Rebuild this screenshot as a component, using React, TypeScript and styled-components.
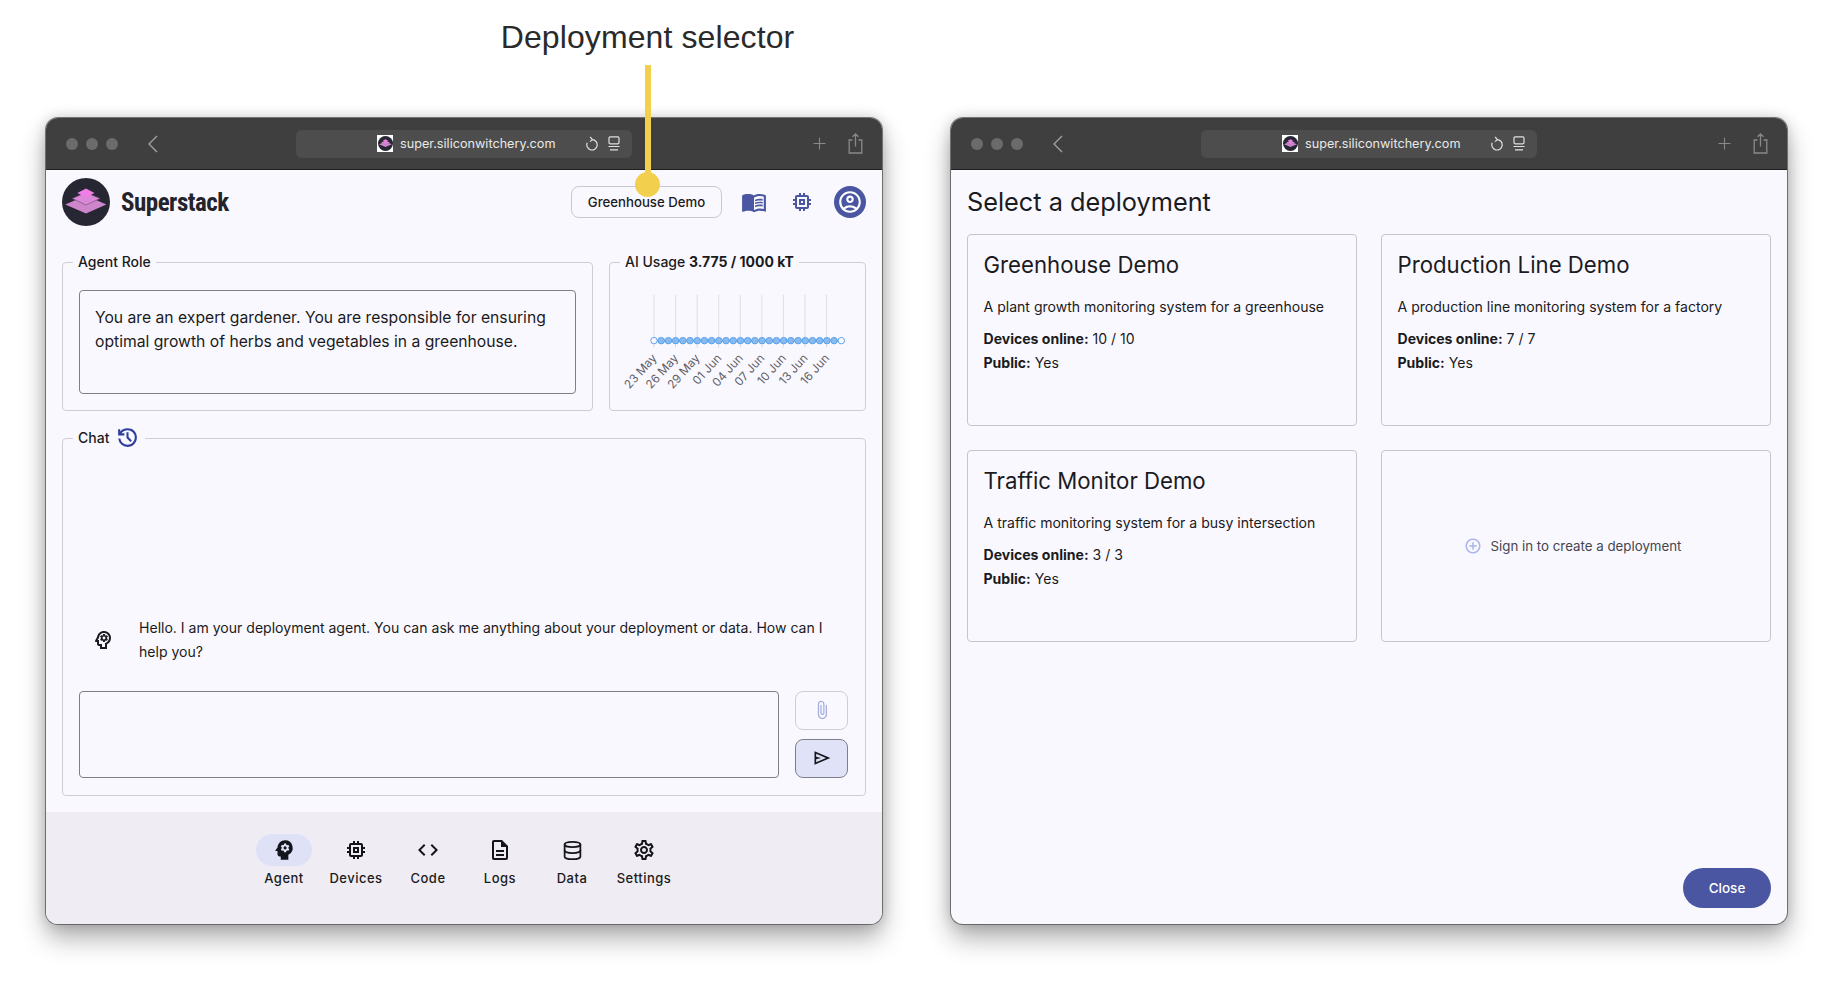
import React from 'react';
import styled, { createGlobalStyle } from 'styled-components';
import { Database, Plus } from 'lucide-react';
import {
  MdAddCircleOutline,
  MdCode,
  MdOutlineAccountCircle,
  MdOutlineAttachFile,
  MdOutlineDescription,
  MdOutlineMemory,
  MdOutlineMenuBook,
  MdOutlinePsychology,
  MdOutlineSettings,
  MdPsychology,
} from 'react-icons/md';

const GlobalStyle = createGlobalStyle`
  html, body {
    margin: 0;
    background: #fff;
    font-family: Inter, "Liberation Sans", sans-serif;
    color: #1a1b21;
  }
  * { box-sizing: border-box; }
`;

const Page = styled.div`
  position: relative;
  width: 1831px;
  height: 996px;
  overflow: hidden;
  display: flex;
  gap: 69px;
  padding: 118px 0 0 46px;
`;

const Callout = styled.div`
  position: absolute;
  left: 480px;
  top: 0;
  width: 335px;
  display: flex;
  flex-direction: column;
  align-items: center;
  z-index: 2;
`;

const CalloutText = styled.div`
  height: 65px;
  line-height: 74px;
  font-family: "Liberation Sans", Arial, sans-serif;
  font-size: 32px;
  letter-spacing: 0.1px;
  color: #2a2a2a;
  white-space: nowrap;
`;

const CalloutLine = styled.div`
  width: 6px;
  height: 114px;
  background: #f2d04e;
`;

const CalloutDot = styled.div`
  width: 25px;
  height: 25px;
  margin-top: -7px;
  border-radius: 50%;
  background: #f2d04e;
`;

const Window = styled.div`
  width: 836px;
  height: 806px;
  display: flex;
  flex-direction: column;
  border-radius: 12px;
  overflow: hidden;
  background: #faf8ff;
  box-shadow: 0 0 0 1px rgba(80, 80, 80, 0.75), 0 14px 26px rgba(0, 0, 0, 0.32), 0 0 14px rgba(0, 0, 0, 0.18);
`;

const TitleBar = styled.div`
  flex: 0 0 52px;
  display: flex;
  align-items: center;
  background: #3f3f3f;
  border-bottom: 1px solid #1f1f1f;
  color: #9a9a9a;
`;

const TrafficLights = styled.div`
  flex: 0 0 250px;
  display: flex;
  align-items: center;
  gap: 8px;
  padding-left: 20px;
`;

const Light = styled.span`
  width: 12px;
  height: 12px;
  border-radius: 50%;
  background: #6b6b6b;
`;

const BackIcon = styled.svg`
  width: 10px;
  height: 18px;
  margin-left: 22px;
`;

const UrlBar = styled.div`
  flex: 0 0 336px;
  height: 28px;
  display: flex;
  align-items: center;
  padding-left: 81px;
  border-radius: 6px;
  background: #4d4d4d;
  color: #e8e8e8;
`;

const Favicon = styled.span`
  width: 16px;
  height: 17px;
  display: flex;
  align-items: center;
  justify-content: center;
  background: #fff;
`;

const UrlText = styled.span`
  margin: 0 29px 0 7px;
  font-size: 12.65px;
  white-space: nowrap;
`;

const UrlTools = styled.div`
  display: flex;
  align-items: center;
  gap: 10px;
`;

const BarActions = styled.div`
  flex: 1;
  display: flex;
  align-items: center;
  justify-content: flex-end;
  gap: 19px;
  padding-right: 19px;
`;

const Body = styled.div`
  flex: 1;
  display: flex;
  flex-direction: column;
  padding: 8px 16px 16px;
`;

const Header = styled.div`
  display: flex;
  align-items: center;
  justify-content: space-between;
  margin-bottom: 26px;
`;

const Brand = styled.div`
  display: flex;
  align-items: center;
  gap: 11px;
`;

const BrandName = styled.div`
  font-family: Roboto, sans-serif;
  font-size: 25px;
  font-weight: 700;
  font-stretch: 75%;
  letter-spacing: -0.5px;
  color: #23232b;
`;

const HeaderTools = styled.div`
  display: flex;
  align-items: center;
  gap: 16px;
  color: #4a56a2;
`;

const SelectorButton = styled.div`
  width: 151px;
  height: 32px;
  display: flex;
  align-items: center;
  justify-content: center;
  border: 1.5px solid #c8c8d2;
  border-radius: 8px;
  font-size: 13.2px;
  font-weight: 500;
  color: #1a1b21;
`;

const IconSlot = styled.div`
  width: 32px;
  height: 32px;
  display: flex;
  align-items: center;
  justify-content: center;
`;

const Avatar = styled(IconSlot)`
  border-radius: 50%;
  background: #4a56a2;
  color: #fff;
`;

const TopRow = styled.div`
  display: grid;
  grid-template-columns: 531px 257px;
  gap: 16px;
`;

const Panel = styled.fieldset<{ $height: number }>`
  margin: 0;
  min-width: 0;
  height: ${(p) => p.$height}px;
  padding: 0 16px 16px;
  display: flex;
  flex-direction: column;
  border: 1.5px solid #cdccd8;
  border-radius: 4px;
`;

const PanelLabel = styled.legend`
  display: flex;
  align-items: center;
  gap: 6px;
  height: 20px;
  margin-left: -6px;
  padding: 0 5px 1px;
  font-size: 14px;
  font-weight: 500;
  white-space: nowrap;
  b { font-weight: 700; }
`;

const TextBox = styled.div`
  flex: 1;
  margin-top: 18px;
  padding: 15px 15px;
  border: 1.5px solid #7f7f8b;
  border-radius: 4px;
  font-size: 15.7px;
  line-height: 24px;
`;

const ChartSvg = styled.svg`
  width: 250px;
  height: 116px;
  margin: 8px 0 0 -17px;
`;

const ChatPanel = styled(Panel)`
  margin-top: 17px;
`;

const ChatBody = styled.div`
  height: 330px;
  display: flex;
  flex-direction: column;
  justify-content: flex-end;
`;

const HistoryIcon = styled.svg`
  width: 25px;
  height: 25px;
  margin: -3px 0;
  fill: #2f3f9e;
`;

const Message = styled.div`
  display: flex;
  align-items: center;
  gap: 24px;
  margin-bottom: 27px;
  padding: 0 10px 0 12px;
  font-size: 14.05px;
  line-height: 24px;
`;

const Composer = styled.div`
  display: grid;
  grid-template-columns: 700px 53px;
  gap: 16px;
`;

const ComposerInput = styled.div`
  height: 87.5px;
  border: 1.5px solid #7f7f8b;
  border-radius: 4px;
`;

const ComposerButtons = styled.div`
  display: flex;
  flex-direction: column;
  justify-content: space-between;
`;

const AttachButton = styled.div`
  height: 39.5px;
  display: flex;
  align-items: center;
  justify-content: center;
  border: 1.5px solid #cdccd8;
  border-radius: 8px;
  color: #a4aedb;
`;

const SendButton = styled(AttachButton)`
  border-color: #7f7f8b;
  background: #e0e3f7;
  color: #14141c;
`;

const SendIcon = styled.svg`
  width: 20px;
  height: 20px;
  fill: currentColor;
`;

const NavBar = styled.nav`
  flex: 0 0 112px;
  display: flex;
  justify-content: center;
  padding-top: 22px;
  background: #efedf3;
`;

const NavItem = styled.div`
  width: 72px;
  display: flex;
  flex-direction: column;
  align-items: center;
  gap: 2px;
  font-size: 13px;
  line-height: 20px;
  font-weight: 500;
  letter-spacing: 0.5px;
`;

const NavIcon = styled.div<{ $active?: boolean }>`
  width: 56px;
  height: 32px;
  display: flex;
  align-items: center;
  justify-content: center;
  border-radius: 16px;
  background: ${(p) => (p.$active ? '#dfe2f6' : 'transparent')};
  color: #14141c;
`;

const PageTitle = styled.h1`
  margin: 7px 0 15px;
  font-size: 25.3px;
  line-height: 34px;
  font-weight: 400;
`;

const CardGrid = styled.div`
  display: grid;
  grid-template-columns: 390px 390px;
  grid-auto-rows: 192px;
  gap: 24px;
`;

const Card = styled.div`
  padding: 14px 15.5px;
  border: 1.5px solid #c5c5d0;
  border-radius: 4px;
`;

const CardTitle = styled.div`
  font-size: 22.2px;
  line-height: 32px;
  margin-bottom: 14px;
`;

const CardText = styled.div`
  font-size: 14.05px;
  line-height: 24px;
  margin-bottom: 8px;
  font-weight: 400;
`;

const CardStat = styled(CardText)`
  margin-bottom: 0;
  b { font-weight: 700; }
`;

const CreateCard = styled(Card)`
  display: flex;
  align-items: center;
  justify-content: center;
  gap: 9px;
  padding: 0 22px 0 15px;
  font-size: 13.3px;
  color: #44454e;
`;

const CreateIcon = styled.span`
  display: flex;
  color: #a9b4f0;
`;

const CloseButton = styled.div`
  align-self: flex-end;
  margin-top: auto;
  width: 88px;
  height: 40px;
  display: flex;
  align-items: center;
  justify-content: center;
  border-radius: 20px;
  background: #4a56a2;
  color: #fff;
  font-size: 13.5px;
  font-weight: 500;
`;

const Logo = ({ size }: { size: number }) => (
  <svg width={size} height={size} viewBox="0 0 48 48">
    <circle cx="24" cy="24" r="24" fill="#262733" />
    <path d="M3.3 26.5 24 17.5 44.3 26.5 24 35.5Z" fill="#cf85cb" />
    <path d="M10.3 20.5 24 14.5 38 20.5 24 27Z" fill="#dc88d8" stroke="#6d4a70" strokeWidth="0.6" />
    <path d="M15.3 15 24 10.5 32.5 15 24 19.5Z" fill="#ee7de6" />
  </svg>
);

const Browser = ({ children }: { children: React.ReactNode }) => (
  <Window>
    <TitleBar>
      <TrafficLights>
        <Light />
        <Light />
        <Light />
        <BackIcon viewBox="0 0 10 18" fill="none" stroke="#a0a0a0" strokeWidth="1.4">
          <path d="M9 1 1 9l8 8" />
        </BackIcon>
      </TrafficLights>
      <UrlBar>
        <Favicon>
          <Logo size={15} />
        </Favicon>
        <UrlText>super.siliconwitchery.com</UrlText>
        <UrlTools>
          <svg width="13" height="16" viewBox="0 0 13 16" fill="none" stroke="#e0e0e0" strokeWidth="1.2">
            <path d="M7.2 3.6a5.2 5.2 0 1 1-5 3.2" />
            <path d="M5.2 1 7.4 3.6 4.9 5.6" />
          </svg>
          <svg width="12" height="15" viewBox="0 0 12 15" fill="none" stroke="#e0e0e0" strokeWidth="1.2">
            <rect x="1" y="0.8" width="10" height="7" rx="1.2" />
            <path d="M0.5 10.5h11M2 13.8h8" />
          </svg>
        </UrlTools>
      </UrlBar>
      <BarActions>
        <Plus size={19} strokeWidth={1.3} color="#8a8a8a" />
        <svg width="15" height="21" viewBox="0 0 15 21" fill="none" stroke="#8a8a8a" strokeWidth="1.3">
          <path d="M4.5 7H1.2v13h12.6V7h-3.3M7.5 13.5V1M4.5 3.8 7.5 1l3 2.8" />
        </svg>
      </BarActions>
    </TitleBar>
    {children}
  </Window>
);

const chartTicks = ['23 May', '26 May', '29 May', '01 Jun', '04 Jun', '07 Jun', '10 Jun', '13 Jun', '16 Jun'];

const UsageChart = () => (
  <ChartSvg viewBox="0 0 250 116">
    {chartTicks.map((tick, i) => (
      <g key={tick}>
        <line x1={43.6 + i * 21.95} x2={43.6 + i * 21.95} y1={15} y2={69} stroke="#dddde3" strokeWidth="1" />
        <text
          x={47 + i * 21.95}
          y={80}
          textAnchor="end"
          fontSize="12"
          fill="#5f5f66"
          transform={`rotate(-48 ${47 + i * 21.95} 80)`}
        >
          {tick}
        </text>
      </g>
    ))}
    <line x1={43.6} x2={234} y1={61.7} y2={61.7} stroke="#4b93e2" strokeWidth="2" />
    {Array.from({ length: 27 }, (_, i) => (
      <circle
        key={i}
        cx={43.6 + i * 7.33}
        cy={61.7}
        r={3.3}
        fill={i === 0 || i === 26 ? '#faf8ff' : '#86baf0'}
        stroke="#5ba2ea"
        strokeWidth="1"
      />
    ))}
  </ChartSvg>
);

const navItems = [
  { label: 'Agent', icon: <MdPsychology size={26} />, active: true },
  { label: 'Devices', icon: <MdOutlineMemory size={24} /> },
  { label: 'Code', icon: <MdCode size={24} /> },
  { label: 'Logs', icon: <MdOutlineDescription size={24} /> },
  { label: 'Data', icon: <Database size={21} strokeWidth={2} /> },
  { label: 'Settings', icon: <MdOutlineSettings size={24} /> },
];

const deployments = [
  { name: 'Greenhouse Demo', text: 'A plant growth monitoring system for a greenhouse', online: '10 / 10' },
  { name: 'Production Line Demo', text: 'A production line monitoring system for a factory', online: '7 / 7' },
  { name: 'Traffic Monitor Demo', text: 'A traffic monitoring system for a busy intersection', online: '3 / 3' },
];

const App: React.FC = () => {
  return (
    <Page>
      <GlobalStyle />
      <Callout>
        <CalloutText>Deployment selector</CalloutText>
        <CalloutLine />
        <CalloutDot />
      </Callout>

      <Browser>
        <Body>
          <Header>
            <Brand>
              <Logo size={48} />
              <BrandName>Superstack</BrandName>
            </Brand>
            <HeaderTools>
              <SelectorButton>Greenhouse Demo</SelectorButton>
              <IconSlot>
                <MdOutlineMenuBook size={26} />
              </IconSlot>
              <IconSlot>
                <MdOutlineMemory size={24} />
              </IconSlot>
              <Avatar>
                <MdOutlineAccountCircle size={26} />
              </Avatar>
            </HeaderTools>
          </Header>

          <TopRow>
            <Panel $height={159}>
              <PanelLabel>Agent Role</PanelLabel>
              <TextBox>
                You are an expert gardener. You are responsible for ensuring optimal growth of herbs and vegetables in a
                greenhouse.
              </TextBox>
            </Panel>
            <Panel $height={159}>
              <PanelLabel>
                <span>
                  AI Usage <b>3.775 / 1000 kT</b>
                </span>
              </PanelLabel>
              <UsageChart />
            </Panel>
          </TopRow>

          <ChatPanel $height={368}>
            <PanelLabel>
              Chat
              <HistoryIcon viewBox="0 -960 960 960">
                <path d="M480-120q-138 0-240.5-91.5T122-440h82q14 104 92.5 172T480-200q117 0 198.5-81.5T760-480q0-117-81.5-198.5T480-760q-69 0-129 32t-101 88h110v80H120v-240h80v94q51-64 124.5-99T480-840q75 0 140.5 28.5t114 77q48.5 48.5 77 114T840-480q0 75-28.5 140.5t-77 114q-48.5 48.5-114 77T480-120Zm112-192L440-464v-216h80v184l128 128-56 56Z" />
              </HistoryIcon>
            </PanelLabel>
            <ChatBody>
              <Message>
                <MdOutlinePsychology size={24} style={{ flexShrink: 0 }} />
                Hello. I am your deployment agent. You can ask me anything about your deployment or data. How can I help
                you?
              </Message>
              <Composer>
                <ComposerInput />
                <ComposerButtons>
                  <AttachButton>
                    <MdOutlineAttachFile size={20} />
                  </AttachButton>
                  <SendButton>
                    <SendIcon viewBox="0 -960 960 960">
                      <path d="M120-160v-640l760 320-760 320Zm80-120 474-200-474-200v140l240 60-240 60v140Z" />
                    </SendIcon>
                  </SendButton>
                </ComposerButtons>
              </Composer>
            </ChatBody>
          </ChatPanel>
        </Body>
        <NavBar>
          {navItems.map((item) => (
            <NavItem key={item.label}>
              <NavIcon $active={item.active}>{item.icon}</NavIcon>
              {item.label}
            </NavItem>
          ))}
        </NavBar>
      </Browser>

      <Browser>
        <Body>
          <PageTitle>Select a deployment</PageTitle>
          <CardGrid>
            {deployments.map((d) => (
              <Card key={d.name}>
                <CardTitle>{d.name}</CardTitle>
                <CardText>{d.text}</CardText>
                <CardStat>
                  <b>Devices online:</b> {d.online}
                </CardStat>
                <CardStat>
                  <b>Public:</b> Yes
                </CardStat>
              </Card>
            ))}
            <CreateCard>
              <CreateIcon>
                <MdAddCircleOutline size={18} />
              </CreateIcon>
              Sign in to create a deployment
            </CreateCard>
          </CardGrid>
          <CloseButton>Close</CloseButton>
        </Body>
      </Browser>
    </Page>
  );
};

export default App;
